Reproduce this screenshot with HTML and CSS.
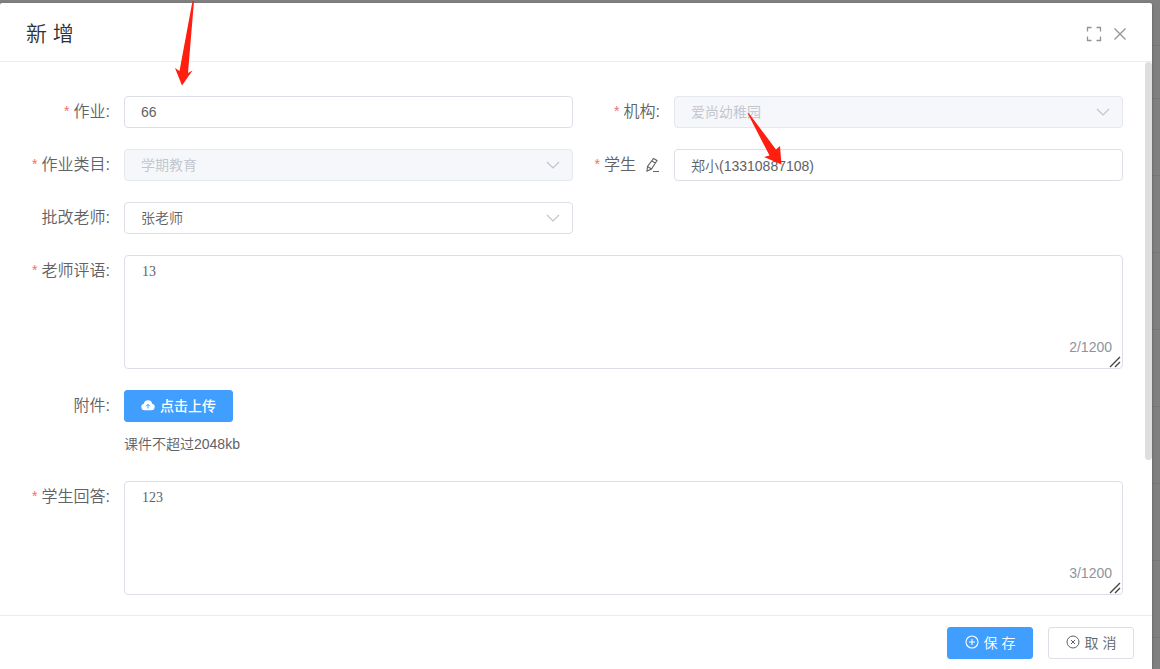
FILE: index.html
```
<!DOCTYPE html>
<html lang="zh-CN">
<head>
    <meta charset="UTF-8">
    <meta name="viewport" content="width=device-width, initial-scale=1.0">
    <title>新增</title>
    <link rel="stylesheet" href="styles.css">
</head>
<body>
    <div class="dialog" role="dialog" aria-labelledby="dialog-title">
        <header class="dialog-header">
            <h1 id="dialog-title">新 增</h1>
            <div class="header-tools">
                <button type="button" class="icon-btn" aria-label="全屏">
                    <svg width="16" height="16" viewBox="0 0 16 16" fill="none" stroke="currentColor" stroke-width="1.3"><path d="M1.500 5.500V1.500H5.500M10.500 1.500h4V5.500M14.500 10.500v4H10.500M5.500 14.500H1.500V10.500"/></svg>
                </button>
                <button type="button" class="icon-btn" aria-label="关闭">
                    <svg width="16" height="16" viewBox="0 0 16 16" fill="none" stroke="currentColor" stroke-width="1.3"><path d="M2.500 2.500l11 11M13.500 2.500l-11 11"/></svg>
                </button>
            </div>
        </header>

        <div class="dialog-main">
            <form class="form" id="homework-form">
                <!-- Basic fields -->
                <div class="item">
                    <label class="label required" for="homework">作业:</label>
                    <div class="field"><input class="control" type="text" id="homework" value="66"></div>
                </div>
                <div class="item">
                    <label class="label required" for="org">机构:</label>
                    <div class="field">
                        <select class="control" id="org" disabled><option>爱尚幼稚园</option></select>
                        <svg class="chevron" width="14" height="14" viewBox="0 0 14 14"><path d="M1 4l6 6 6-6"/></svg>
                    </div>
                </div>
                <div class="item">
                    <label class="label required" for="category">作业类目:</label>
                    <div class="field">
                        <select class="control" id="category" disabled><option>学期教育</option></select>
                        <svg class="chevron" width="14" height="14" viewBox="0 0 14 14"><path d="M1 4l6 6 6-6"/></svg>
                    </div>
                </div>
                <div class="item">
                    <label class="label required" for="student">学生
                        <svg class="edit-icon" width="16" height="16" viewBox="0 0 16 16" fill="none" stroke="currentColor" stroke-width="1.1"><path d="M9.500 1.500l3.500 2-5.500 8.500-4.500 2 .5-4.500zM8 4l3.500 2.200M3.500 9.500l4 2.500M9 14.500h6"/></svg>
                    </label>
                    <div class="field"><input class="control" type="text" id="student" value="郑小(13310887108)"></div>
                </div>
                <div class="item">
                    <label class="label" for="teacher">批改老师:</label>
                    <div class="field">
                        <select class="control" id="teacher"><option>张老师</option></select>
                        <svg class="chevron" width="14" height="14" viewBox="0 0 14 14"><path d="M1 4l6 6 6-6"/></svg>
                    </div>
                </div>

                <!-- Full width fields -->
                <div class="item wide">
                    <label class="label required" for="comment">老师评语:</label>
                    <div class="field">
                        <textarea class="control" id="comment" maxlength="1200">13</textarea>
                        <span class="count">2/1200</span>
                        <svg class="grip" width="12" height="12" viewBox="0 0 12 12"><path d="M1 11L11 1M6 11l5-5"/></svg>
                    </div>
                </div>
                <div class="item wide">
                    <span class="label">附件:</span>
                    <div class="field">
                        <button type="button" class="btn primary upload">
                            <svg width="14" height="14" viewBox="0 0 14 14"><path fill="currentColor" d="M3.500 12.200A3.300 3.300 0 0 1 2.800 5.700 4.300 4.300 0 0 1 11.200 5.700 3.300 3.300 0 0 1 10.500 12.200z"/><path stroke="#409eff" fill="none" d="M7 10.500V6.500M5 8.300l2-2 2 2"/></svg>
                            点击上传
                        </button>
                        <p class="hint">课件不超过2048kb</p>
                    </div>
                </div>
                <div class="item wide">
                    <label class="label required" for="answer">学生回答:</label>
                    <div class="field">
                        <textarea class="control" id="answer" maxlength="1200">123</textarea>
                        <span class="count">3/1200</span>
                        <svg class="grip" width="12" height="12" viewBox="0 0 12 12"><path d="M1 11L11 1M6 11l5-5"/></svg>
                    </div>
                </div>
            </form>
            <div class="scroll-thumb"></div>
        </div>

        <footer class="dialog-footer">
            <button type="submit" form="homework-form" class="btn primary">
                <svg width="14" height="14" viewBox="0 0 14 14" fill="none" stroke="currentColor" stroke-width="1.1"><circle cx="7" cy="7" r="6"/><path d="M7 4v6M4 7h6"/></svg>
                保 存
            </button>
            <button type="button" class="btn">
                <svg width="14" height="14" viewBox="0 0 14 14" fill="none" stroke="currentColor"><circle cx="7" cy="7" r="6"/><path d="M5 5l4 4M9 5L5 9"/></svg>
                取 消
            </button>
        </footer>
    </div>

    <!-- Arrows drawn over the form -->
    <svg class="arrow arrow-homework" width="20" height="86" viewBox="0 0 20 86"><path d="M17.500 1h1.500L13 73l4.500-2.500L7 85.500 0 68l4.500 3z"/></svg>
    <svg class="arrow arrow-student" width="36" height="54" viewBox="0 0 36 54"><path d="M.500 1L2 1.500 29 37.500l4-3.500 1.500 18.500L17 45l5.500-1.500z"/></svg>
</body>
</html>
```

FILE: styles.css
```
* {
    margin: 0;
    padding: 0;
    box-sizing: border-box;
}

body {
    position: relative;
    height: 100vh;
    overflow: hidden;
    padding: 3px 8px 0 0;
    /* dimmed table rows behind the dialog */
    background: linear-gradient(#808080 45px, #777 45px 46px, #808080 46px) 0 0 / 100% 98px no-repeat,
        repeating-linear-gradient(#808080 0 21px, #777 21px 22px, #808080 22px 77px);
    color: #606266;
    font-family: "Liberation Sans", "Noto Sans CJK SC", sans-serif;
    font-size: 14px;
    font-weight: 350;
}

button, input, select, textarea {
    font: inherit;
    color: inherit;
}

/* Dialog */
.dialog {
    display: flex;
    flex-direction: column;
    height: 100%;
    background: #fff;
    border-radius: 2px 2px 0 0;
    box-shadow: 0 1px 3px rgba(0, 0, 0, 0.3);
}

.dialog-header {
    display: flex;
    align-items: center;
    justify-content: space-between;
    height: 59px;
    padding: 3px 24px 0 26px;
    border-bottom: 1px solid #ebeef0;
}

.dialog-header h1 {
    color: #303133;
    font-size: 21px;
    font-weight: 350;
    line-height: 28px;
}

.header-tools {
    display: flex;
    gap: 10px;
}

.icon-btn {
    display: flex;
    border: none;
    background: none;
    color: #909399;
    cursor: pointer;
}

.dialog-main {
    position: relative;
    flex: 1;
    min-height: 0;
    overflow: hidden;
}

.scroll-thumb {
    position: absolute;
    top: 0;
    right: 0;
    width: 7px;
    height: 72%;
    border-radius: 4px;
    background: #dddee0;
}

/* Form */
.form {
    display: grid;
    grid-template-columns: 1fr 1fr;
    gap: 21px 1px;
    padding: 34px 29px 20px 24px;
}

.item {
    display: flex;
}

.wide {
    grid-column: 1 / -1;
}

.label {
    display: flex;
    justify-content: flex-end;
    width: 100px;
    padding-right: 14px;
    font-size: 16px;
    line-height: 31px;
    white-space: nowrap;
}

.required::before {
    content: "*";
    margin-right: 4px;
    color: #f56c6c;
    font-size: 14px;
}

.edit-icon {
    margin: 8px 0 0 8px;
}

.field {
    position: relative;
    flex: 1;
    min-width: 0;
}

.control {
    display: block;
    width: 100%;
    height: 32px;
    padding: 0 16px 1px;
    border: 1px solid #dcdfe6;
    border-radius: 4px;
    background: #fff;
    outline: none;
    appearance: none;
}

.control:disabled {
    border-color: #e4e7ed;
    background: #f5f7fa;
    color: #c0c4cc;
    opacity: 1;
}

textarea.control {
    height: 114px;
    padding: 6px 17px;
    font-family: "Liberation Serif", serif;
    line-height: 20px;
    resize: none;
}

.chevron {
    position: absolute;
    top: 9px;
    right: 13px;
    fill: none;
    stroke: #c0c4cc;
    stroke-width: 1.2;
    pointer-events: none;
}

.count {
    position: absolute;
    right: 11px;
    bottom: 14px;
    color: #909399;
    line-height: 16px;
}

.grip {
    position: absolute;
    right: 2px;
    bottom: 1px;
    stroke: #444;
    stroke-width: 1.4;
}

.hint {
    margin-top: 11px;
    padding-bottom: 5px;
    line-height: 22px;
}

/* Buttons */
.btn {
    display: flex;
    align-items: center;
    justify-content: center;
    gap: 5px;
    min-width: 86px;
    height: 32px;
    padding: 0 16px 2px;
    border: 1px solid #dcdfe6;
    border-radius: 3px;
    background: #fff;
    cursor: pointer;
}

.primary {
    border-color: #409eff;
    background: #409eff;
    color: #fff;
}

.upload {
    font-weight: 500;
}

.dialog-footer {
    display: flex;
    justify-content: flex-end;
    gap: 15px;
    padding: 11px 18px 10px;
    border-top: 1px solid #ebeef0;
}

/* Arrows */
.arrow {
    position: absolute;
    fill: #ff1e10;
    pointer-events: none;
}

.arrow-homework {
    top: 0;
    left: 175px;
}

.arrow-student {
    top: 112px;
    left: 747px;
}
```
